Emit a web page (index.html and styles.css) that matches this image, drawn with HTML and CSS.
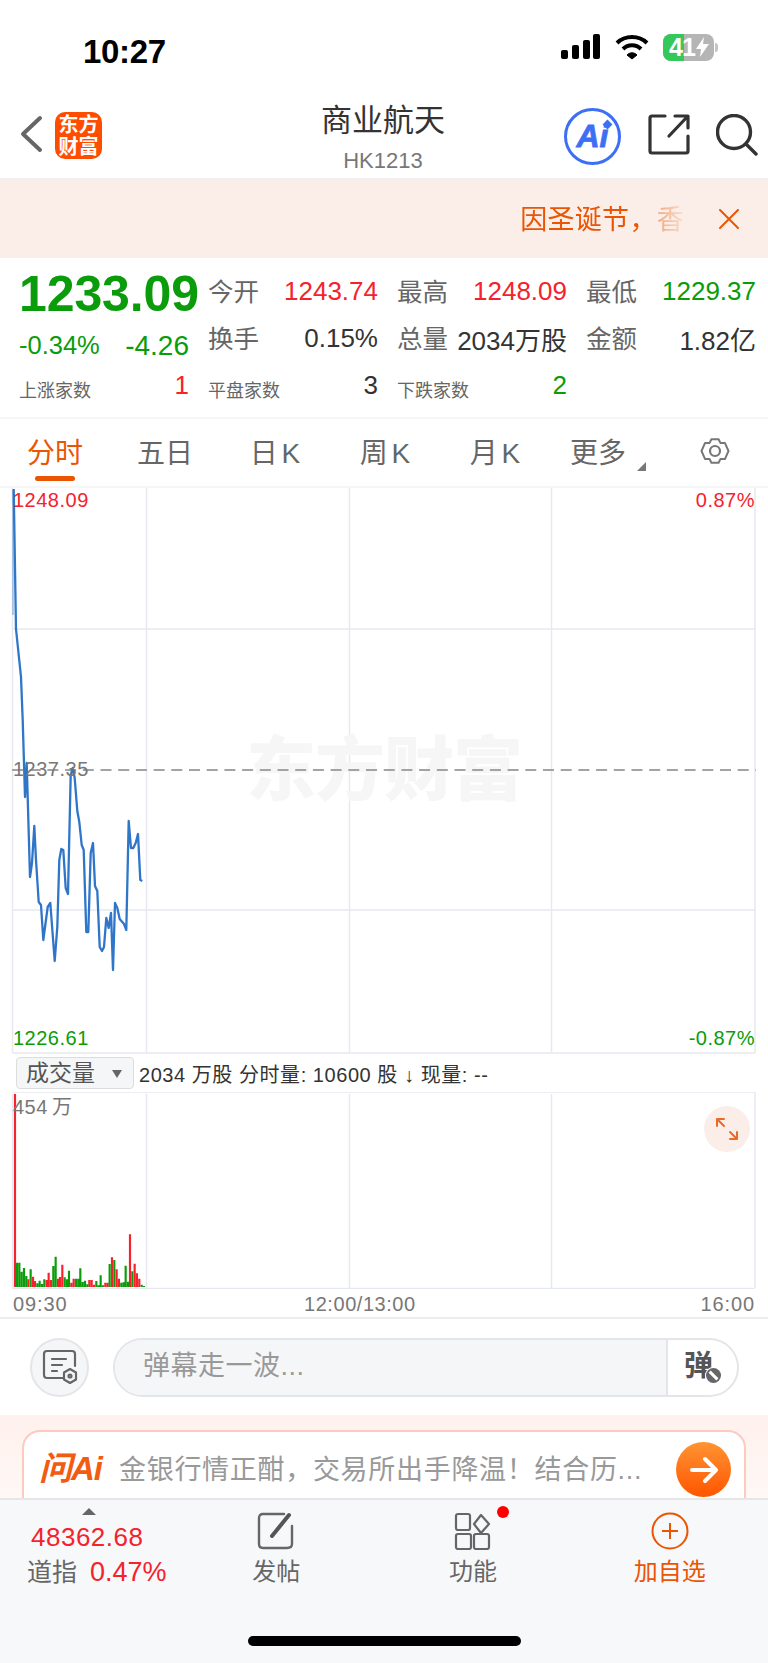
FILE: index.html
```html
<!DOCTYPE html>
<html lang="zh-CN">
<head>
  <meta charset="UTF-8">
  <title>商业航天 HK1213</title>
  <meta name="viewport" content="width=device-width,initial-scale=1">
  <link rel="stylesheet" href="styles.css">
</head>
<body>
<div class="phone">

  <!-- status bar -->
  <div class="status">
    <span class="clock">10:27</span>
    <div class="status-icons">
      <svg width="40" height="26" viewBox="0 0 40 26" fill="#000">
        <rect x="0" y="16" width="7" height="9" rx="2"/>
        <rect x="11" y="11" width="7" height="14" rx="2"/>
        <rect x="22" y="6" width="7" height="19" rx="2"/>
        <rect x="32" y="0" width="7" height="25" rx="2"/>
      </svg>
      <svg class="wifi" width="34" height="26" viewBox="0 0 34 26" fill="none" stroke="#000" stroke-width="4">
        <path d="M2 9 C10 1 24 1 32 9"/>
        <path d="M8 15 C13 10 21 10 26 15"/>
        <path d="M12 21 L17 25 L22 21 C19 18 15 18 12 21Z" fill="#000" stroke-width="1"/>
      </svg>
      <div class="battery">
        <span class="battery-fill"></span>
        <span class="battery-num">41</span>
        <svg class="bolt" width="13" height="20" viewBox="0 0 13 20" fill="#fff"><path d="M8 0 L0 12 H5 L4 20 L13 7 H7Z"/></svg>
      </div>
      <span class="battery-cap"></span>
    </div>
  </div>

  <!-- nav -->
  <div class="nav">
    <svg class="back" width="24" height="38" viewBox="0 0 24 38" fill="none" stroke="#666" stroke-width="4" stroke-linecap="round" stroke-linejoin="round">
      <path d="M20 3 L3 19 L20 35"/>
    </svg>
    <div class="brand">东方<br>财富</div>
    <div class="nav-title">
      <div class="title">商业航天</div>
      <div class="code">HK1213</div>
    </div>
    <div class="ai-badge"><span>Ai</span><i></i></div>
    <svg class="share" width="42" height="42" viewBox="0 0 42 42" fill="none" stroke="#333" stroke-width="3.2" stroke-linecap="round" stroke-linejoin="round">
      <path d="M17 3 H4 Q2 3 2 5 V38 Q2 40 4 40 H38 Q40 40 40 38 V23"/>
      <path d="M21 23 L39 4 M27 3 H40 V15"/>
    </svg>
    <svg class="search" width="42" height="42" viewBox="0 0 42 42" fill="none" stroke="#333" stroke-width="3.4" stroke-linecap="round">
      <circle cx="18" cy="18" r="16.5"/>
      <path d="M30 30 L40 40"/>
    </svg>
  </div>

  <!-- notice -->
  <div class="notice">
    <div class="notice-text">因圣诞节，香</div>
    <svg width="20" height="20" viewBox="0 0 20 20" stroke="#ea5504" stroke-width="2" stroke-linecap="round"><path d="M1 1 L19 19 M19 1 L1 19"/></svg>
  </div>

  <!-- quote -->
  <div class="quote">
    <div class="price">1233.09</div>
    <div class="cell"><span class="lbl">今开</span><span class="val red">1243.74</span></div>
    <div class="cell"><span class="lbl">最高</span><span class="val red">1248.09</span></div>
    <div class="cell"><span class="lbl">最低</span><span class="val green">1229.37</span></div>

    <div class="change"><span>-0.34%</span><span class="change-abs">-4.26</span></div>
    <div class="cell"><span class="lbl">换手</span><span class="val">0.15%</span></div>
    <div class="cell"><span class="lbl">总量</span><span class="val">2034万股</span></div>
    <div class="cell"><span class="lbl">金额</span><span class="val">1.82亿</span></div>

    <div class="cell"><span class="lbl small">上涨家数</span><span class="val red">1</span></div>
    <div class="cell"><span class="lbl small">平盘家数</span><span class="val">3</span></div>
    <div class="cell"><span class="lbl small">下跌家数</span><span class="val green">2</span></div>
  </div>

  <!-- period tabs -->
  <div class="tabs">
    <div class="tab active">分时</div>
    <div class="tab">五日</div>
    <div class="tab">日 K</div>
    <div class="tab">周 K</div>
    <div class="tab">月 K</div>
    <div class="tab more">更多<i></i></div>
    <div class="tab">
      <svg width="32" height="32" viewBox="0 0 32 32" fill="none" stroke="#777" stroke-width="2.2" stroke-linejoin="round">
        <path d="M12 3 H20 L22 7 L27 7 L31 16 L27 25 L22 25 L20 29 H12 L10 25 L5 25 L1 16 L5 7 L10 7Z" transform="translate(1.6 1.6) scale(.9)"/>
        <circle cx="16" cy="16" r="5"/>
      </svg>
    </div>
  </div>

  <!-- price chart -->
  <div class="chart">
    <svg class="plot" width="768" height="566" viewBox="0 488 768 566" fill="none">
      <g stroke="#e6e9f0" stroke-width="1.5">
        <path d="M12.5 629 H755 M12.5 910 H755 M12.5 1053 H755"/>
        <path d="M12.5 488 V1053 M146.5 488 V1053 M349.5 488 V1053 M551.5 488 V1053 M755 488 V1053"/>
      </g>
      <text class="mark" x="384" y="795" text-anchor="middle">东方财富</text>
      <path d="M12 770 H756" stroke="#a3a3a3" stroke-width="2" stroke-dasharray="11 6.7"/>
      <path d="M13 490 V615" stroke="#2f76c9" stroke-opacity=".45" stroke-width="1.5"/>
      <polyline stroke="#2f76c9" stroke-width="2.3" stroke-linejoin="round" points="13.7,489 16,629 21,677 22.7,720 25,797 26.7,763 30,877 32,863 34.3,826 36,860 38.7,902 41,905 43.3,940 47.7,907 50.3,903 54.7,961 57.3,927 59.3,860 61.3,849 63.3,850 65.7,888 68,894 70.7,775 72.7,768 74.7,778 77.3,811 79.3,822 81.7,845 83.7,850 86.3,932 88.3,932 90.7,853 93,843 95,886 97.3,891 99.7,947 102,951 104,947 106.3,918 108.7,928 111,913 113,970 115,903 117.3,908 119.7,919 124,924 126.3,930 128.7,821 131,848 133.3,848 135.7,843 138,834 140.3,880 142.3,881"/>
    </svg>
    <span class="axis-l top red">1248.09</span>
    <span class="axis-r top red">0.87%</span>
    <span class="axis-l mid gray">1237.35</span>
    <span class="axis-l bot green">1226.61</span>
    <span class="axis-r bot green">-0.87%</span>
  </div>

  <!-- volume header -->
  <div class="vol-head">
    <div class="vol-select">成交量<i></i></div>
    <span>2034 万股 分时量: 10600 股 ↓ 现量: --</span>
  </div>

  <!-- volume chart -->
  <div class="volume">
    <svg class="plot" width="768" height="197" viewBox="0 1092 768 197" fill="none">
      <g stroke="#e6e9f0" stroke-width="1.5">
        <path d="M12 1092 H755 M12 1288.500 H755"/>
        <path d="M12.5 1094 V1288 M146.5 1094 V1288 M349.5 1094 V1288 M551.5 1094 V1288 M755 1092 V1288"/>
      </g>
      <g transform="translate(0 1040) scale(.3333)" stroke-width="6.500">
        <path stroke="#f5222d" d="M45 741V162M85 741V718M99 741V710M105 741V723M140 741V720M146 741V698M153 741V720M174 741V716M180 741V711M187 741V674M214 741V728M221 741V716M268 741V720M275 741V720M282 741V734M316 741V728M323 741V728M336 741V652M350 741V688M357 741V716M390 741V583M404 741V671M411 741V700M418 741V716"/>
        <path stroke="#0a9c0a" d="M51 741V668M58 741V668M65 741V695M72 741V684M79 741V708M92 741V688M112 741V730M119 741V722M126 741V732M133 741V718M160 741V678M167 741V650M194 741V712M201 741V718M207 741V692M228 741V716M235 741V716M241 741V685M248 741V726M255 741V722M262 741V733M289 741V723M296 741V736M302 741V706M309 741V736M329 741V672M343 741V660M364 741V728M371 741V727M377 741V677M384 741V725M397 741V694M425 741V734M432 741V738"/>
      </g>
    </svg>
    <span class="vol-max">454 万</span>
    <div class="expand">
      <svg width="24" height="24" viewBox="0 0 24 24" fill="none" stroke="#ea6a2a" stroke-width="2" stroke-linecap="round" stroke-linejoin="round">
        <path d="M2 9 V2 H9 M2 2 L9 9 M22 15 V22 H15 M22 22 L15 15"/>
      </svg>
    </div>
  </div>

  <div class="time-axis"><span>09:30</span><span class="noon">12:00/13:00</span><span>16:00</span></div>

  <!-- comment bar -->
  <div class="comment">
    <div class="round-btn">
      <svg width="36" height="36" viewBox="0 0 36 36" fill="none" stroke="#666" stroke-width="2.2" stroke-linecap="round" stroke-linejoin="round">
        <path d="M21 29 H5 Q2 29 2 26 V5 Q2 2 5 2 H30 Q33 2 33 5 V17"/>
        <path d="M10 10 H24 M10 16 H20 M10 22 H15"/>
        <path d="M28 20 L34 23.500 V30.500 L28 34 L22 30.500 V23.500Z"/>
        <circle cx="28" cy="27" r="1.500"/>
      </svg>
    </div>
    <div class="pill">
      <div class="pill-input">弹幕走一波...</div>
      <div class="pill-btn">弹<i></i></div>
    </div>
  </div>

  <!-- ask ai -->
  <div class="ask">
    <div class="ask-card">
      <span class="ask-logo">问Ai</span>
      <span class="ask-text">金银行情正酣，交易所出手降温！结合历...</span>
      <div class="ask-go">
        <svg width="30" height="28" viewBox="0 0 30 28" fill="none" stroke="#fff" stroke-width="4" stroke-linecap="round" stroke-linejoin="round">
          <path d="M3 14 H27 M16 3 L27 14 L16 25"/>
        </svg>
      </div>
    </div>
  </div>

  <!-- bottom bar -->
  <div class="bottom">
    <div class="index">
      <i class="index-up"></i>
      <div class="index-num">48362.68</div>
      <div class="index-row"><span class="index-name">道指</span><span class="red">0.47%</span></div>
    </div>
    <div class="bottom-item">
      <svg width="38" height="38" viewBox="0 0 38 38" fill="none" stroke="#666" stroke-width="2.400" stroke-linecap="round">
        <path d="M27 2 H6 Q2 2 2 6 V32 Q2 36 6 36 H30 Q35 36 35 32 V14"/>
        <path d="M15 24 L32 3" stroke="#555" stroke-width="4"/>
      </svg>
      <span>发帖</span>
    </div>
    <div class="bottom-item">
      <svg width="38" height="38" viewBox="0 0 38 38" fill="none" stroke="#666" stroke-width="2.200" stroke-linejoin="round">
        <rect x="2" y="2" width="14" height="16" rx="2"/>
        <path d="M27 3 L35 12 L27 21 L20 12Z"/>
        <rect x="2" y="22" width="15" height="15" rx="2"/>
        <rect x="20" y="22" width="15" height="15" rx="2"/>
      </svg>
      <i class="dot"></i>
      <span>功能</span>
    </div>
    <div class="bottom-item add">
      <svg width="38" height="38" viewBox="0 0 38 38" fill="none" stroke="#ea5504" stroke-width="2">
        <circle cx="19" cy="19" r="17.500"/>
        <path d="M11 19 H27 M19 11 V27"/>
      </svg>
      <span>加自选</span>
    </div>
    <div class="home-bar"></div>
  </div>

</div>
</body>
</html>
```

FILE: styles.css
```css
* { box-sizing: border-box; }
body {
  margin: 0;
  background: #fff;
  color: #333;
  font-family: "Liberation Sans", "Noto Sans CJK SC", sans-serif;
}
i { font-style: normal; display: block; }

.red { color: #f5222d; }
.green { color: #0a9c0a; }
.gray { color: #777; }

.phone {
  width: 768px; height: 1663px;
  display: flex; flex-direction: column;
  overflow: hidden;
}

/* status bar */
.status {
  height: 90px; flex: none;
  display: flex; justify-content: space-between; align-items: center;
  padding: 14px 50px 0 83px;
}
.clock { font-size: 33px; font-weight: 700; color: #000; letter-spacing: -.3px; }
.status-icons { display: flex; align-items: center; margin-top: -10px; }
.wifi { margin-left: 14px; }
.battery {
  position: relative;
  width: 51px; height: 27px;
  margin-left: 14px;
  border-radius: 8px;
  background: #b5b5b5;
  overflow: hidden;
  display: flex; align-items: center;
}
.battery-fill { position: absolute; left: 0; top: 0; bottom: 0; width: 21px; background: #34c759; }
.battery-num {
  position: relative;
  margin-left: 6px;
  color: #fff; font-size: 25px; font-weight: 700; letter-spacing: -1px;
}
.bolt { position: relative; margin-left: 1px; }
.battery-cap { width: 3px; height: 9px; margin-left: 1px; background: #c4c4c4; border-radius: 0 3px 3px 0; }

/* nav */
.nav {
  height: 90px; flex: none;
  display: flex; align-items: center;
  border-bottom: 2px solid #f0f0f0;
  padding: 6px 0 0 20px;
  position: relative;
}
.back { margin-top: -6px; }
.brand {
  width: 47px; height: 47px;
  margin: -4px 0 0 11px;
  background: #ff4d00;
  border-radius: 10px;
  color: #fff;
  font-size: 20px; font-weight: 700; line-height: 22px;
  text-align: center;
  padding-top: 2px;
}
.nav-title { width: 300px; margin: 2px 0 0 131px; text-align: center; }
.title { font-size: 31px; line-height: 40px; color: #333; }
.code { font-size: 22px; line-height: 30px; color: #777; margin-top: 5px; }
.ai-badge {
  position: relative;
  width: 57px; height: 57px;
  margin: -2px 0 0 31px;
  border: 3px solid #3d6ff5;
  border-radius: 50%;
  color: #3d6ff5;
  text-align: center;
  font-size: 32px; font-weight: 700; font-style: italic; line-height: 50px;
  -webkit-text-stroke: .8px #3d6ff5;
}
.ai-badge i {
  position: absolute; left: 37px; top: 10px;
  width: 7px; height: 7px;
  background: #3d6ff5;
  transform: rotate(45deg);
}
.share { margin: -6px 0 0 27px; }
.search { margin: -4px 0 0 26px; }

/* notice */
.notice {
  height: 78px; flex: none;
  background: #fbeee8;
  display: flex; justify-content: flex-end; align-items: center;
  padding-right: 29px;
  gap: 35px;
}
.notice-text {
  padding-bottom: 4px;
  font-size: 27px;
  letter-spacing: .3px;
  color: #ea5504;
  -webkit-mask-image: linear-gradient(to right, #000 77%, rgba(0,0,0,.45) 84%, rgba(0,0,0,.1) 100%);
  mask-image: linear-gradient(to right, #000 77%, rgba(0,0,0,.45) 84%, rgba(0,0,0,.1) 100%);
}

/* quote */
.quote {
  height: 159px; flex: none;
  padding: 10px 0 0 19px;
  display: grid;
  grid-template-columns: repeat(4, 170px);
  grid-auto-rows: 47px;
  column-gap: 19px;
}
.price {
  font-size: 50px; font-weight: 700;
  color: #0a9c0a;
  line-height: 52px;
  letter-spacing: -.1px;
  white-space: nowrap;
}
.change {
  display: flex; justify-content: space-between; align-items: center;
  padding-top: 14px;
  font-size: 25.500px;
  color: #0a9c0a;
}
.change-abs { font-size: 28px; }
.cell { display: flex; justify-content: space-between; align-items: center; white-space: nowrap; }
.lbl { font-size: 25.500px; color: #666; padding-bottom: 5px; }
.lbl.small { font-size: 18px; padding: 6px 0 0; }
.val { font-size: 26px; }

/* tabs */
.tabs {
  height: 71px; flex: none;
  display: grid;
  grid-template-columns: repeat(7, 110px);
  border-top: 2px solid #f6f6f6;
  border-bottom: 2px solid #f6f6f6;
}
.tab {
  position: relative;
  display: flex; justify-content: center; align-items: center;
  padding-bottom: 3px;
  font-size: 28px;
  word-spacing: -4px;
  color: #666;
}
.tab.active { color: #ea5504; }
.tab.active::after {
  content: "";
  position: absolute; left: 35px; bottom: 5px;
  width: 40px; height: 5px;
  border-radius: 3px;
  background: #ea5504;
}
.tab.more { padding-right: 14px; }
.tab.more i {
  position: absolute; left: 87px; bottom: 15px;
  border-left: 9px solid transparent;
  border-bottom: 9px solid #777;
}

/* charts */
.chart, .volume { position: relative; flex: none; }
.chart { height: 566px; }
.volume { height: 197px; }
.plot { display: block; }
.mark { font-size: 70px; font-weight: 900; fill: #f6f6f6; stroke: none; letter-spacing: -1px; }
.chart span { position: absolute; font-size: 20px; line-height: 24px; letter-spacing: .5px; }
.axis-l { left: 13px; }
.axis-r { right: 13px; }
.chart .top { top: 0; }
.chart .mid { top: 269px; }
.chart .bot { top: 538px; }

.vol-head {
  height: 38px; flex: none;
  display: flex; align-items: center;
  padding-left: 16px;
  font-size: 20px;
  letter-spacing: .55px;
  color: #333;
}
.vol-select {
  position: relative;
  width: 118px; height: 32px;
  margin-right: 5px;
  padding-left: 9px;
  background: #f5f6f8;
  border: 1px solid #ddd;
  border-radius: 4px;
  font-size: 23px; line-height: 30px;
  color: #555;
  letter-spacing: 0;
}
.vol-select i {
  position: absolute; right: 11px; top: 12px;
  border-top: 8px solid #666;
  border-left: 5px solid transparent;
  border-right: 5px solid transparent;
}
.vol-max {
  position: absolute; left: 13px; top: 3px;
  font-size: 20px; line-height: 24px;
  color: #777;
  letter-spacing: .5px;
  word-spacing: -2px;
}
.expand {
  position: absolute; left: 704px; top: 14px;
  width: 46px; height: 46px;
  border-radius: 50%;
  background: #fbeee8;
  display: flex; justify-content: center; align-items: center;
}
.time-axis {
  position: relative;
  height: 30px; flex: none;
  display: flex; justify-content: space-between; align-items: center;
  padding: 3px 13px 0;
  border-bottom: 2px solid #ececec;
  font-size: 20px;
  letter-spacing: .9px;
  color: #777;
}
.noon { position: absolute; left: 304px; letter-spacing: .55px; }

/* comment bar */
.comment {
  height: 96px; flex: none;
  display: flex; align-items: center;
  padding: 0 29px 0 30px;
  gap: 24px;
}
.round-btn {
  width: 59px; height: 59px;
  border: 2px solid #e4e5e8;
  border-radius: 50%;
  background: #f5f6f8;
  display: flex; justify-content: center; align-items: center;
  flex: none;
}
.pill {
  flex: 1; height: 59px;
  display: flex;
  border: 2px solid #e4e5e8;
  border-radius: 30px;
  overflow: hidden;
}
.pill-input {
  flex: 1;
  background: #f5f6f8;
  border-right: 2px solid #e4e5e8;
  padding-left: 28px;
  font-size: 27px; line-height: 52px;
  letter-spacing: .5px;
  color: #999;
}
.pill-btn {
  position: relative;
  width: 69px;
  padding: 6px 0 0 16px;
  font-size: 29px; font-weight: 700; line-height: 40px;
  color: #555;
}
.pill-btn i {
  position: absolute; left: 38px; top: 28px;
  width: 15px; height: 15px;
  border-radius: 50%;
  background: #666;
  box-shadow: 0 0 0 1px #fff;
}
.pill-btn i::after {
  content: "";
  position: absolute; left: 2px; top: 6px;
  width: 11px; height: 3px;
  background: #fff;
  transform: rotate(45deg);
}

/* ask ai */
.ask {
  height: 83px; flex: none;
  padding: 15px 22px 0;
  background: linear-gradient(to bottom, #fff1ed, #fff8f5);
  overflow: hidden;
}
.ask-card {
  height: 100px;
  display: flex; align-items: flex-start;
  padding: 6px 13px 0 15px;
  background: #fff;
  border: 2px solid #ffc9c0;
  border-bottom: none;
  border-radius: 18px 18px 0 0;
}
.ask-logo {
  width: 80px; flex: none;
  padding-top: 11px;
  font-size: 33px; font-weight: 700; font-style: italic; line-height: 40px;
  color: #f25c12;
  letter-spacing: -1px;
}
.ask-text {
  flex: 1;
  padding-top: 12px;
  font-size: 27px; line-height: 40px;
  letter-spacing: .7px;
  color: #999;
  white-space: nowrap;
}
.ask-go {
  width: 55px; height: 55px;
  flex: none;
  margin-top: 4px;
  border-radius: 50%;
  background: linear-gradient(to bottom, #ff9433, #ff5500);
  display: flex; justify-content: center; align-items: center;
}

/* bottom bar */
.bottom {
  position: relative;
  flex: 1;
  display: grid;
  grid-template-columns: 178px 1fr 1fr 1fr;
  background: #f7f8fa;
  border-top: 2px solid #e6e6ea;
}
.index { position: relative; padding: 24px 0 0 27px; }
.index-up {
  position: absolute; left: 82px; top: 8px;
  border-bottom: 7px solid #666;
  border-left: 7px solid transparent;
  border-right: 7px solid transparent;
}
.index-num { margin-left: 4px; font-size: 26px; line-height: 26px; letter-spacing: .5px; color: #f5222d; }
.index-row { display: flex; align-items: center; gap: 13px; margin-top: 4px; font-size: 25px; line-height: 36px; }
.index-row .red { font-size: 27px; }
.index-name { color: #666; }
.bottom-item {
  position: relative;
  display: flex; flex-direction: column; align-items: center;
  padding-top: 12px;
  font-size: 24px;
  color: #666;
}
.bottom-item span { margin-top: 4px; line-height: 36px; }
.bottom-item.add { color: #ea5504; }
.dot {
  position: absolute; left: 122px; top: 6px;
  width: 12px; height: 12px;
  border-radius: 50%;
  background: #f00;
}
.home-bar {
  position: absolute; left: 248px; bottom: 17px;
  width: 273px; height: 10px;
  border-radius: 5px;
  background: #000;
}
```
